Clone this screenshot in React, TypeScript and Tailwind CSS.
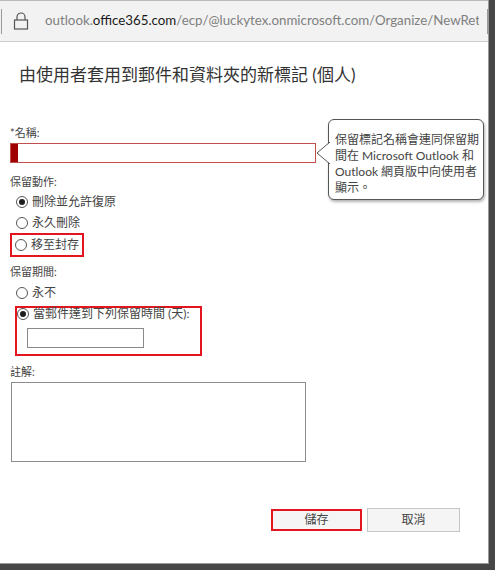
import React from "react";

function Radio({ checked }: { checked?: boolean }) {
  return (
    <span className="w-[12px] h-[12px] rounded-full border border-[#555] bg-white flex items-center justify-center shrink-0">
      {checked && <span className="w-[6px] h-[6px] rounded-full bg-[#1e1e1e]" />}
    </span>
  );
}

function Option({ label, checked }: { label: string; checked?: boolean }) {
  return (
    <div className="flex items-center h-[21px] pl-[6px] gap-[4px] text-[12px] text-[#444] whitespace-nowrap">
      <Radio checked={checked} />
      <span>{label}</span>
    </div>
  );
}

export default function App() {
  return (
    <div className="w-[495px] h-[570px] bg-[#474747] font-['Lato','Noto_Sans_CJK_TC',sans-serif] text-[#333]">
      <div className="w-[489px] h-[564px] bg-white flex flex-col border-r border-b border-[#9a9a9a] relative">
        {/* address bar */}
        <div className="h-[42px] bg-[#f2f2f2] border-t border-b border-t-[#b9b9b9] border-b-[#cdcdcd] flex items-center">
          <span className="w-px h-[25px] bg-[#9a9a9a] ml-px" />
          <svg width="16" height="18" viewBox="0 0 16 18" className="ml-[11px]" fill="none" stroke="#555" strokeWidth="1.2">
            <path d="M4 8V5a4 4 0 0 1 8 0v3" />
            <rect x="1.5" y="8" width="13" height="9" />
          </svg>
          <div className="ml-[16px] w-[434px] overflow-hidden whitespace-nowrap text-[13.3px] text-[#808080]">
            outlook.<span className="text-[#1a1a1a]">office365.com</span>/ecp/@luckytex.onmicrosoft.com/Organize/NewRetentionPolicyTag
          </div>
          <span className="w-px h-[25px] bg-[#9a9a9a] ml-auto" />
        </div>

        <h1 className="mt-[21px] ml-[19px] text-[17px] leading-[24px] font-normal text-[#333] whitespace-nowrap">
          由使用者套用到郵件和資料夾的新標記 (個人)
        </h1>

        <div className="flex flex-col px-[10px] mt-[38px]">
          <div className="text-[11px] leading-[16px] text-[#444]">*名稱:</div>
          <div className="mt-[2px] w-[306px] h-[20px] border border-[#c0504d] flex">
            <span className="w-[7px] h-full bg-[#a00000]" />
          </div>

          <div className="mt-[11px] text-[11px] leading-[16px] text-[#444]">保留動作:</div>
          <div className="mt-px">
            <Option label="刪除並允許復原" checked />
            <Option label="永久刪除" />
          </div>
          <div className="w-[74px] h-[24px] border-2 border-[#e3161f] flex items-center pl-[3px] gap-[4px] text-[12px] text-[#444] whitespace-nowrap">
            <Radio />
            <span>移至封存</span>
          </div>

          <div className="mt-[7px] text-[11px] leading-[16px] text-[#444]">保留期間:</div>
          <div className="mt-[2px]">
            <Option label="永不" />
          </div>
          <div className="mt-[3px] ml-[5px] w-[187px] h-[50px] border-2 border-[#e3161f] flex flex-col">
            <div className="-mt-[2px] h-[16px] flex items-center gap-[4px] text-[12px] text-[#444] whitespace-nowrap">
              <Radio checked />
              <span>當郵件達到下列保留時間 (天):</span>
            </div>
            <div className="mt-[6px] ml-[10px] w-[117px] h-[20px] border border-[#8a8a8a]" />
          </div>

          <div className="mt-[8px] text-[11px] leading-[16px] text-[#444]">註解:</div>
          <div className="mt-[2px] ml-px w-[295px] h-[80px] border border-[#8c8c8c]" />

          <div className="mt-[46px] flex justify-end items-center gap-[5px] pr-[18px] text-[12px] text-[#444]">
            <button className="w-[91px] h-[22px] bg-[#f5f5f5] border-2 border-[#e3161f] flex items-center justify-center">
              儲存
            </button>
            <button className="w-[93px] h-[24px] bg-[#f5f5f5] border border-[#c3c7c9] flex items-center justify-center">
              取消
            </button>
          </div>
        </div>

        {/* tooltip callout */}
        <div className="absolute left-[328px] top-[119px] w-[156px] h-[81px] bg-white border border-[#555] rounded-[6px] shadow-[1px_2px_3px_rgba(0,0,0,0.3)] pl-[6px] pt-[12px] text-[12px] leading-[16px] text-[#444]">
          <svg width="14" height="22" viewBox="0 0 14 22" className="absolute -left-[13px] top-[22px]">
            <path d="M14 0 L1 11 L14 22" fill="white" stroke="#555" strokeWidth="1" />
            <rect x="13" y="1" width="2" height="20" fill="white" />
          </svg>
          保留標記名稱會連同保留期間在 Microsoft Outlook 和 Outlook 網頁版中向使用者顯示。
        </div>
      </div>
    </div>
  );
}
